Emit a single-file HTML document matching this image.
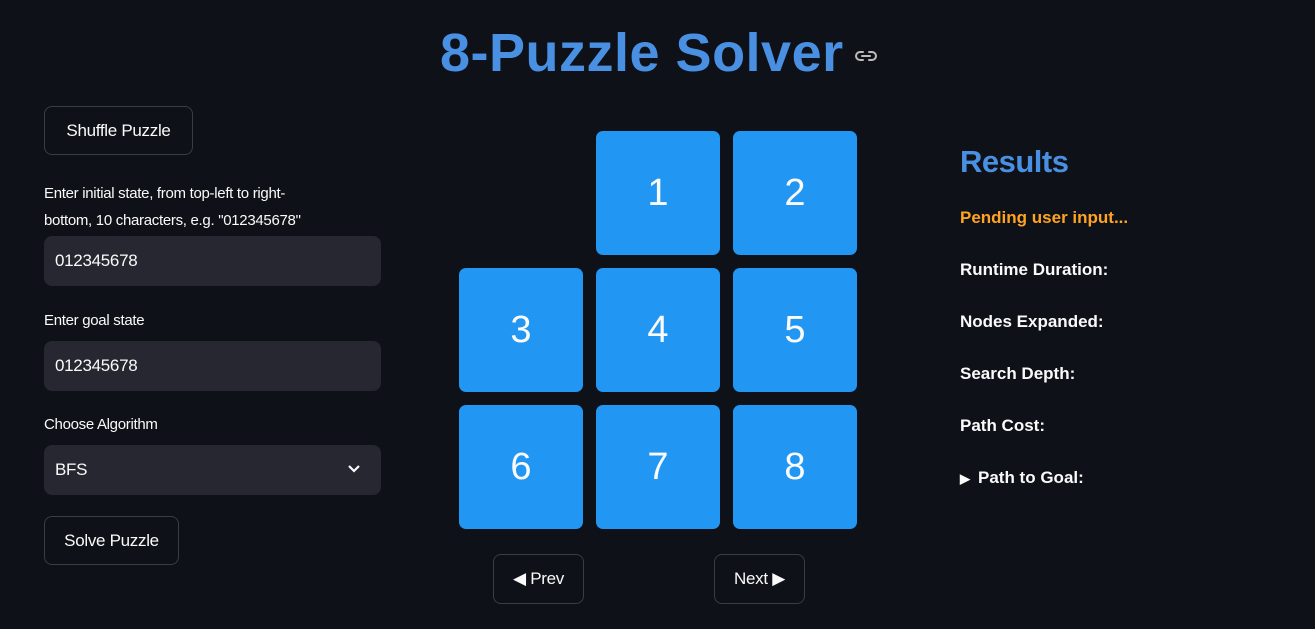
<!DOCTYPE html>
<html><head><style>
body{margin:0;width:1315px;height:629px;background:#0e1117;font-family:"Liberation Sans",sans-serif;color:#fafafa;position:relative;overflow:hidden}
.a{position:absolute}
.btn{position:absolute;border:1px solid #3b3d45;border-radius:8px;background:#0e1117;font-size:17px;display:flex;align-items:center;justify-content:center;box-sizing:border-box;letter-spacing:-0.3px}
.inp{position:absolute;left:44px;width:337px;height:50px;background:#262730;border-radius:8px;font-size:17px;box-sizing:border-box;padding-left:11px;display:flex;align-items:center;letter-spacing:-0.3px}
.lbl{position:absolute;left:44px;font-size:15px;letter-spacing:-0.3px}
.t{position:absolute;width:124px;height:124px;background:#2196f3;border-radius:7px;font-size:38px;display:flex;align-items:center;justify-content:center}
.r{position:absolute;left:960px;font-size:17px;font-weight:bold;letter-spacing:0px}
</style></head><body>
<div class="a" style="left:440px;top:20px;font-size:54px;font-weight:bold;color:#4a90e2;letter-spacing:0.5px;line-height:66px">8-Puzzle Solver</div>
<svg class="a" style="left:854px;top:48px" width="24" height="16" viewBox="0 0 24 16"><path d="M9 4H6a4 4 0 0 0 0 8h3M15 4h3a4 4 0 0 1 0 8h-3M8 8h8" stroke="#bbb" stroke-width="2" fill="none" stroke-linecap="round"/></svg>
<div class="btn" style="left:44px;top:106px;width:149px;height:49px">Shuffle Puzzle</div>
<div class="lbl" style="top:180px;line-height:27px">Enter initial state, from top-left to right-<br>bottom, 10 characters, e.g. "012345678"</div>
<div class="inp" style="top:236px">012345678</div>
<div class="lbl" style="top:312px">Enter goal state</div>
<div class="inp" style="top:341px">012345678</div>
<div class="lbl" style="top:416px">Choose Algorithm</div>
<div class="inp" style="top:445px">BFS<svg class="a" style="left:303px;top:19px" width="14" height="10" viewBox="0 0 14 10"><path d="M2 2l5 5 5-5" stroke="#fafafa" stroke-width="2.2" fill="none"/></svg></div>
<div class="btn" style="left:44px;top:516px;width:135px;height:49px">Solve Puzzle</div>
<div class="t" style="left:596px;top:131px">1</div>
<div class="t" style="left:733px;top:131px">2</div>
<div class="t" style="left:459px;top:268px">3</div>
<div class="t" style="left:596px;top:268px">4</div>
<div class="t" style="left:733px;top:268px">5</div>
<div class="t" style="left:459px;top:405px">6</div>
<div class="t" style="left:596px;top:405px">7</div>
<div class="t" style="left:733px;top:405px">8</div>
<div class="btn" style="left:493px;top:554px;width:91px;height:50px">◀ Prev</div>
<div class="btn" style="left:714px;top:554px;width:91px;height:50px">Next ▶</div>
<div class="a" style="left:960px;top:144px;font-size:31px;font-weight:bold;color:#4a90e2;letter-spacing:-0.5px">Results</div>
<div class="r" style="top:208px;color:#ffa421">Pending user input...</div>
<div class="r" style="top:260px">Runtime Duration:</div>
<div class="r" style="top:312px">Nodes Expanded:</div>
<div class="r" style="top:364px">Search Depth:</div>
<div class="r" style="top:416px">Path Cost:</div>
<div class="r" style="top:468px"><span style="font-size:13px;margin-right:8px">▶</span>Path to Goal:</div>
</body></html>
